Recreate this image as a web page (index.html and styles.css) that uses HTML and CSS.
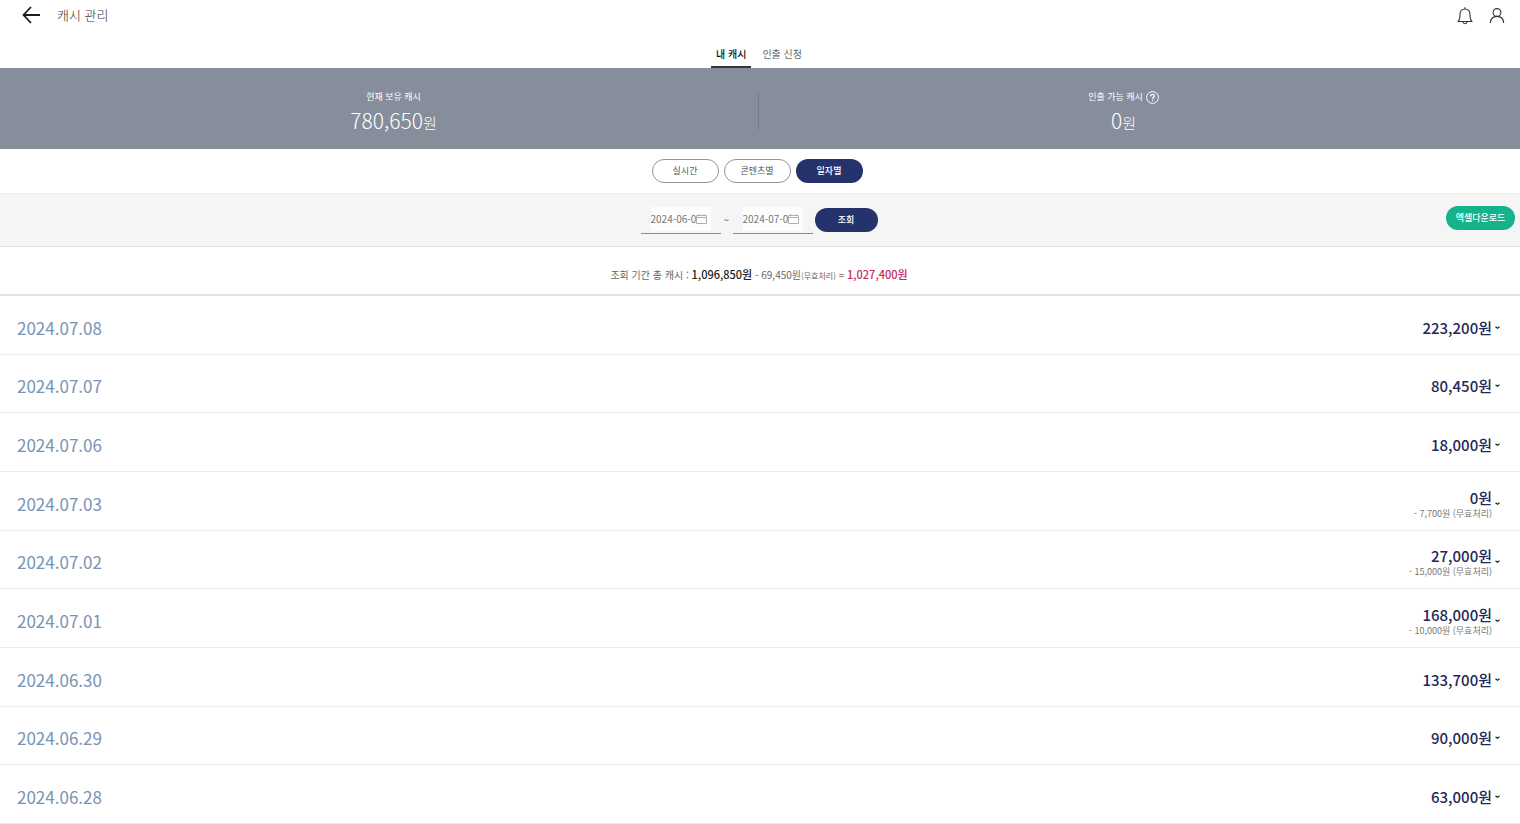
FILE: index.html
```
<!DOCTYPE html>
<html lang="ko">
<head>
<meta charset="utf-8">
<meta name="viewport" content="width=device-width, initial-scale=1">
<title>캐시 관리</title>
<link rel="stylesheet" href="styles.css">
</head>
<body>
<header class="topbar">
  <button class="icon-btn" type="button" aria-label="뒤로">
    <svg width="18" height="18" viewBox="0 0 18 18" fill="none" stroke="#1c1c1c" stroke-width="1.8"><path d="M9 1 1.5 9 9 17M1.5 9H18"/></svg>
  </button>
  <h1 class="title">캐시 관리</h1>
  <div class="actions">
    <button class="icon-btn" type="button" aria-label="알림">
      <svg width="16" height="18" viewBox="0 0 16 18" fill="none" stroke="#333" stroke-width="1.1"><path d="M8 .3V2M1 14.500C2.800 13 3 12 3 7.500 3 4 5 2 8 2s5 2 5 5.500c0 4.500.2 5.500 2 7z" stroke-linejoin="round"/><path d="M5.800 14.800c.3 2.600 4.100 2.600 4.400 0"/></svg>
    </button>
    <button class="icon-btn" type="button" aria-label="내 정보">
      <svg width="16" height="18" viewBox="0 0 16 18" fill="none" stroke="#333" stroke-width="1.1"><circle cx="8" cy="5.500" r="3.900"/><path d="M1.300 16c.3-4 3-6.600 6.700-6.600s6.400 2.600 6.700 6.600"/></svg>
    </button>
  </div>
</header>

<nav class="tabs">
  <a class="tab tab-active" href="#cash">내 캐시</a>
  <a class="tab" href="#withdraw">인출 신청</a>
</nav>

<section class="summary">
  <div class="balance">
    <div class="balance-label">현재 보유 캐시</div>
    <div class="balance-value">780,650<span class="won">원</span></div>
  </div>
  <div class="divider"></div>
  <div class="balance">
    <div class="balance-label">인출 가능 캐시
      <button class="icon-btn" type="button" aria-label="도움말"><svg width="13" height="13" viewBox="0 0 13 13" fill="none" stroke="#fff"><circle cx="6.500" cy="6.500" r="5.900"/><path d="M4.700 5.200c0-2.400 3.700-2.300 3.700-.1 0 1.300-1.800 1.300-1.800 2.700M6.600 8.800v1.200" stroke-width="1.300"/></svg></button>
    </div>
    <div class="balance-value">0<span class="won">원</span></div>
  </div>
</section>

<div class="modes">
  <button class="pill pill-outline" type="button">실시간</button>
  <button class="pill pill-outline" type="button">콘텐츠별</button>
  <button class="pill pill-navy" type="button">일자별</button>
</div>

<form class="search">
  <div class="date-field"><div class="date-box">
    <input class="date-input" type="text" value="2024-06-08" aria-label="시작일">
    <svg class="calendar" width="11" height="10" viewBox="0 0 11 10" fill="none" stroke="#b0b0b0"><path d="M.5 1.500h10v8H.5zM.5 3.500h10M3 0v2M8 0v2"/></svg>
  </div></div>
  <span class="tilde">~</span>
  <div class="date-field"><div class="date-box">
    <input class="date-input" type="text" value="2024-07-08" aria-label="종료일">
    <svg class="calendar" width="11" height="10" viewBox="0 0 11 10" fill="none" stroke="#b0b0b0"><path d="M.5 1.500h10v8H.5zM.5 3.500h10M3 0v2M8 0v2"/></svg>
  </div></div>
  <button class="pill pill-navy pill-search" type="button">조회</button>
  <button class="pill pill-green" type="button">엑셀다운로드</button>
</form>

<p class="total">조회 기간 총 캐시 : <strong class="gross">1,096,850원</strong> - 69,450원<small class="void-note">(무효처리)</small> = <strong class="net">1,027,400원</strong></p>

<ul class="days">
  <li class="day"><span class="date">2024.07.08</span><span class="amounts"><strong class="amount">223,200원</strong></span><button class="icon-btn" type="button" aria-label="펼치기"><svg width="5" height="4" viewBox="0 0 5 4" fill="none" stroke="#222" stroke-width="1.2"><path d="M.5.7l2 1.600 2-1.600"/></svg></button></li>
  <li class="day"><span class="date">2024.07.07</span><span class="amounts"><strong class="amount">80,450원</strong></span><button class="icon-btn" type="button" aria-label="펼치기"><svg width="5" height="4" viewBox="0 0 5 4" fill="none" stroke="#222" stroke-width="1.2"><path d="M.5.7l2 1.600 2-1.600"/></svg></button></li>
  <li class="day"><span class="date">2024.07.06</span><span class="amounts"><strong class="amount">18,000원</strong></span><button class="icon-btn" type="button" aria-label="펼치기"><svg width="5" height="4" viewBox="0 0 5 4" fill="none" stroke="#222" stroke-width="1.2"><path d="M.5.7l2 1.600 2-1.600"/></svg></button></li>
  <li class="day"><span class="date">2024.07.03</span><span class="amounts"><strong class="amount">0원</strong><span class="void">- 7,700원 (무효처리)</span></span><button class="icon-btn" type="button" aria-label="펼치기"><svg width="5" height="4" viewBox="0 0 5 4" fill="none" stroke="#222" stroke-width="1.2"><path d="M.5.7l2 1.600 2-1.600"/></svg></button></li>
  <li class="day"><span class="date">2024.07.02</span><span class="amounts"><strong class="amount">27,000원</strong><span class="void">- 15,000원 (무효처리)</span></span><button class="icon-btn" type="button" aria-label="펼치기"><svg width="5" height="4" viewBox="0 0 5 4" fill="none" stroke="#222" stroke-width="1.2"><path d="M.5.7l2 1.600 2-1.600"/></svg></button></li>
  <li class="day"><span class="date">2024.07.01</span><span class="amounts"><strong class="amount">168,000원</strong><span class="void">- 10,000원 (무효처리)</span></span><button class="icon-btn" type="button" aria-label="펼치기"><svg width="5" height="4" viewBox="0 0 5 4" fill="none" stroke="#222" stroke-width="1.2"><path d="M.5.7l2 1.600 2-1.600"/></svg></button></li>
  <li class="day"><span class="date">2024.06.30</span><span class="amounts"><strong class="amount">133,700원</strong></span><button class="icon-btn" type="button" aria-label="펼치기"><svg width="5" height="4" viewBox="0 0 5 4" fill="none" stroke="#222" stroke-width="1.2"><path d="M.5.7l2 1.600 2-1.600"/></svg></button></li>
  <li class="day"><span class="date">2024.06.29</span><span class="amounts"><strong class="amount">90,000원</strong></span><button class="icon-btn" type="button" aria-label="펼치기"><svg width="5" height="4" viewBox="0 0 5 4" fill="none" stroke="#222" stroke-width="1.2"><path d="M.5.7l2 1.600 2-1.600"/></svg></button></li>
  <li class="day"><span class="date">2024.06.28</span><span class="amounts"><strong class="amount">63,000원</strong></span><button class="icon-btn" type="button" aria-label="펼치기"><svg width="5" height="4" viewBox="0 0 5 4" fill="none" stroke="#222" stroke-width="1.2"><path d="M.5.7l2 1.600 2-1.600"/></svg></button></li>
</ul>
</body>
</html>
```
FILE: styles.css
```
* {
  box-sizing: border-box;
}

body {
  margin: 0;
  min-height: 100vh;
  display: flex;
  flex-direction: column;
  background: #fff;
  color: #666;
  font-family: "Noto Sans CJK KR", sans-serif;
  font-size: 10px;
  line-height: 16px;
}

button,
input {
  font: inherit;
}

.icon-btn {
  display: flex;
  padding: 0;
  border: 0;
  background: none;
}

.topbar {
  display: flex;
  align-items: center;
  padding: 4px 15px 0 22px;
}

.title {
  margin: 0 0 0 17px;
  font-size: 13px;
  font-weight: 300;
  line-height: 22px;
  color: #333;
}

.actions {
  display: flex;
  gap: 16px;
  margin-left: auto;
  padding-top: 2px;
}

.tabs {
  display: flex;
  justify-content: center;
  gap: 6px;
  padding: 16px 2px 0 0;
}

.tab {
  padding: 4px 5px;
  border-bottom: 2px solid transparent;
  color: #666;
  text-decoration: none;
}

.tab-active {
  border-color: #33363f;
  color: #111;
  font-weight: 500;
}

.summary {
  display: flex;
  align-items: center;
  padding: 20px 32px 15px 29px;
  background: #868d9b;
  color: #fff;
}

.balance {
  flex: 1;
  text-align: center;
}

.divider {
  width: 1px;
  height: 37px;
  background: #747b89;
}

.balance-label {
  display: flex;
  align-items: center;
  justify-content: center;
  gap: 3px;
  font-size: 9px;
  line-height: 18px;
}

.balance-value {
  font-size: 21px;
  font-weight: 300;
  line-height: 28px;
}

.won {
  font-size: 15px;
  line-height: 16px;
}

.modes {
  display: flex;
  justify-content: center;
  gap: 5px;
  padding: 10px 6px 10px 0;
}

.pill {
  width: 67px;
  height: 24px;
  padding: 0;
  border: 0;
  border-radius: 12px;
  font-size: 9px;
  line-height: 16px;
  white-space: nowrap;
}

.pill-outline {
  border: 1px solid #8f939d;
  background: #fff;
  color: #555;
}

.pill-navy {
  background: #25326c;
  color: #fff;
  font-weight: 500;
}

.search {
  position: relative;
  display: flex;
  justify-content: center;
  align-items: center;
  padding: 12px 2px 12px 0;
  border-top: 1px solid #ebebeb;
  border-bottom: 1px solid #e3e3e3;
  background: #f5f5f5;
}

.date-field {
  width: 80px;
  padding: 1px 10px 2px;
  border-bottom: 1px solid #3fa3d0;
}

.date-box {
  display: flex;
  align-items: center;
  height: 24px;
  background: #fdfdfd;
}

.date-input {
  width: 45px;
  padding: 0;
  border: 0;
  background: none;
  color: #777;
  font-size: 10px;
}

.tilde {
  width: 12px;
  text-align: center;
}

.pill-search {
  width: 63px;
  margin-left: 2px;
}

.pill-green {
  position: absolute;
  top: 12px;
  right: 5px;
  width: 69px;
  background: #14b38b;
  color: #fff;
  font-weight: 500;
}

.total {
  margin: 0;
  padding: 20px 2px 11px 0;
  border-bottom: 2px solid #e2e2e2;
  text-align: center;
}

.gross,
.net {
  font-size: 11px;
  font-weight: 500;
  line-height: 12px;
}

.gross {
  color: #222;
}

.net {
  color: #c9285a;
}

.void-note {
  font-size: 8px;
  line-height: 12px;
}

.days {
  flex: 1;
  display: grid;
  grid-auto-rows: 1fr;
  margin: 0;
  padding: 0;
  list-style: none;
}

.day {
  display: flex;
  align-items: center;
  gap: 3px;
  min-height: 56px;
  padding: 6px 20px 0 17px;
  border-bottom: 1px solid #ececec;
}

.date {
  flex: 1;
  color: #7a93b4;
  font-size: 17px;
  line-height: 24px;
}

.amounts {
  display: flex;
  flex-direction: column;
  align-items: flex-end;
}

.amount {
  color: #1e2859;
  font-size: 15px;
  font-weight: 500;
  line-height: 20px;
}

.void {
  color: #777;
  font-size: 9px;
  line-height: 12px;
}
```
